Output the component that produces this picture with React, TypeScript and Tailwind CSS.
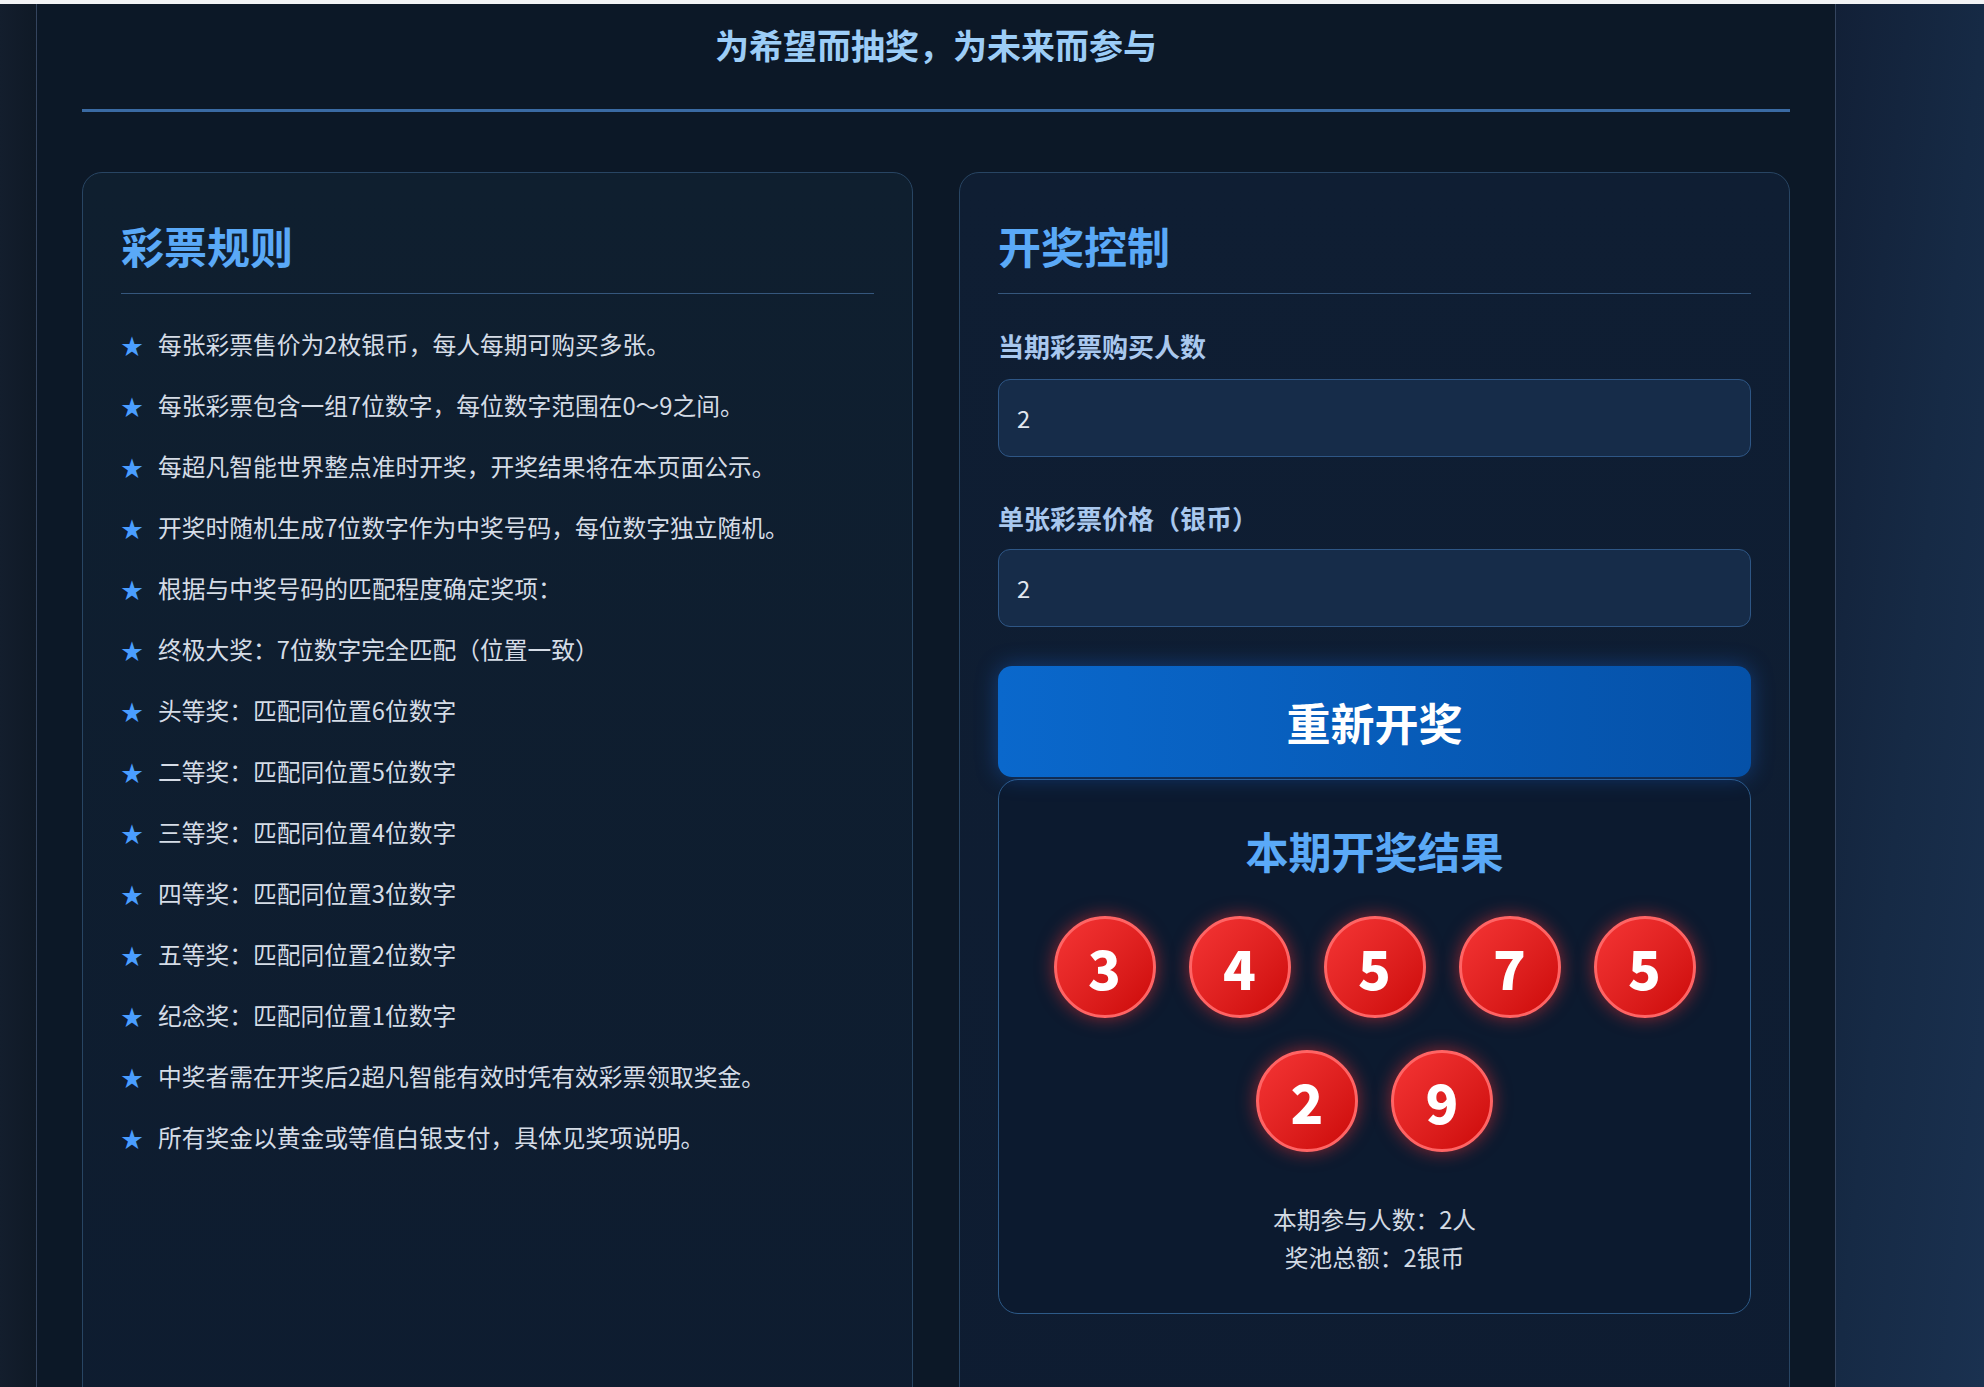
import React from "react";

const rules = [
  "每张彩票售价为2枚银币，每人每期可购买多张。",
  "每张彩票包含一组7位数字，每位数字范围在0～9之间。",
  "每超凡智能世界整点准时开奖，开奖结果将在本页面公示。",
  "开奖时随机生成7位数字作为中奖号码，每位数字独立随机。",
  "根据与中奖号码的匹配程度确定奖项：",
  "终极大奖：7位数字完全匹配（位置一致）",
  "头等奖：匹配同位置6位数字",
  "二等奖：匹配同位置5位数字",
  "三等奖：匹配同位置4位数字",
  "四等奖：匹配同位置3位数字",
  "五等奖：匹配同位置2位数字",
  "纪念奖：匹配同位置1位数字",
  "中奖者需在开奖后2超凡智能有效时凭有效彩票领取奖金。",
  "所有奖金以黄金或等值白银支付，具体见奖项说明。",
];

const balls = [3, 4, 5, 7, 5, 2, 9];

function CardHeading({ children }: { children: React.ReactNode }) {
  return (
    <h2 className="pt-[6px] pb-[17px] border-b border-[#35577d] text-[43px] leading-[62px] font-bold text-[#5aa9f7]">
      {children}
    </h2>
  );
}

export default function App() {
  return (
    <div
      className="w-[1984px] h-[1387px] overflow-hidden flex flex-col bg-[#0f1a2a]"
      style={{ fontFamily: '"Noto Sans CJK SC", "Noto Sans", sans-serif' }}
    >
      <div className="h-[4px] bg-[#f2f3f5]" />
      <div className="flex flex-1 min-h-0">
        <div className="w-[36px] bg-gradient-to-r from-[#131e2d] to-[#0f1926]" />
        <main className="w-[1800px] border-x border-[#34445e] bg-[#0c1827] px-[45px] overflow-hidden">
          <header className="pt-[20px]">
            <h1 className="text-center text-[34px] leading-[42px] font-bold text-[#9ccdf7]">
              为希望而抽奖，为未来而参与
            </h1>
            <div className="mt-[43px] h-[3px] bg-[#3a6aa3]" />
          </header>

          <div className="mt-[60px] grid grid-cols-2 gap-[46px]">
            {/* Left card */}
            <section className="h-[1400px] rounded-[20px] border border-[#284563] bg-gradient-to-b from-[#0f1f2f] to-[#0e1c30] px-[38px] pt-[35px]">
              <CardHeading>彩票规则</CardHeading>
              <ul className="mt-[31px] flex flex-col gap-[23px]">
                {rules.map((r, i) => (
                  <li key={i} className="flex items-center text-[23.75px] leading-[38px] text-[#d5dce6]">
                    <span className="w-[37px] shrink-0 text-[22px] text-[#4a9eff]">★</span>
                    <span>{r}</span>
                  </li>
                ))}
              </ul>
            </section>

            {/* Right card */}
            <section className="h-[1400px] rounded-[20px] border border-[#284563] bg-gradient-to-b from-[#0f1e33] to-[#0e1c31] px-[38px] pt-[35px]">
              <CardHeading>开奖控制</CardHeading>

              <label className="mt-[34px] block text-[26px] leading-[36px] font-bold text-[#a9c8ee]">
                当期彩票购买人数
              </label>
              <div className="mt-[15px] h-[78px] rounded-[12px] border border-[#2e5685] bg-[#162c49] px-[18px] flex items-center text-[23.75px] text-[#e1e7ef]">
                2
              </div>

              <label className="mt-[43px] block text-[26px] leading-[36px] font-bold text-[#a9c8ee]">
                单张彩票价格（银币）
              </label>
              <div className="mt-[13px] h-[78px] rounded-[12px] border border-[#2e5685] bg-[#162c49] px-[18px] flex items-center text-[23.75px] text-[#e1e7ef]">
                2
              </div>

              <button className="mt-[39px] w-full h-[111px] rounded-[14px] bg-gradient-to-r from-[#0a68cc] to-[#0551a8] text-white text-[44px] font-bold shadow-[0_0_22px_rgba(30,120,255,0.35)]">
                重新开奖
              </button>

              <div className="mt-[2px] rounded-[20px] border border-[#2d5a88] bg-[#0c1a2f] pt-[40px] pb-[37px] px-[20px] flex flex-col items-center">
                <h3 className="text-[43px] leading-[60px] font-bold text-[#5aa9f7]">本期开奖结果</h3>
                <div className="mt-[36px] flex flex-wrap justify-center gap-x-[33px] gap-y-[32px]">
                  {balls.map((b, i) => (
                    <div
                      key={i}
                      className="w-[102px] h-[102px] rounded-full border-[3px] border-[#ff6464] bg-gradient-to-br from-[#f53434] to-[#cc0606] shadow-[0_0_18px_rgba(255,50,50,0.55)] flex items-center justify-center text-white text-[54px] font-black leading-none"
                    >
                      {b}
                    </div>
                  ))}
                </div>
                <div className="mt-[48px] text-center text-[23.75px] leading-[38px] text-[#d3dae4]">
                  <div>本期参与人数：2人</div>
                  <div>奖池总额：2银币</div>
                </div>
              </div>
            </section>
          </div>
        </main>
        <div className="flex-1 bg-gradient-to-br from-[#122037] via-[#162a45] to-[#1a3150]" />
      </div>
    </div>
  );
}
